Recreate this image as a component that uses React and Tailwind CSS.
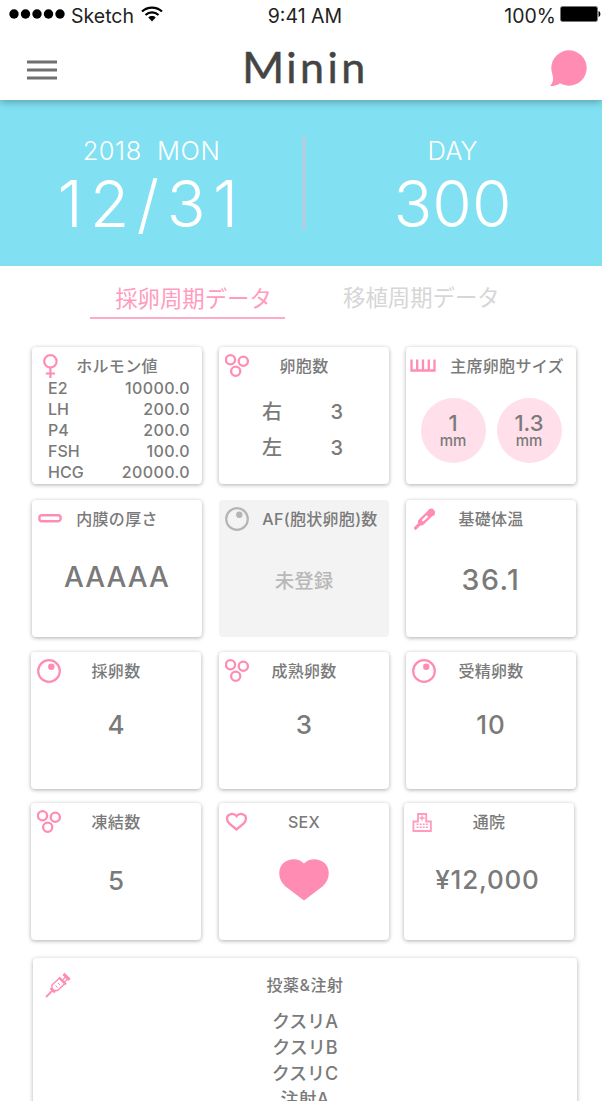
import clsx from "clsx";

function FemaleIcon() {
  return (
    <svg width="24" height="24" viewBox="0 0 24 24" fill="none" stroke="#ff8db3" strokeWidth="2.2">
      <circle cx="12.4" cy="7.3" r="6.2" />
      <path d="M12.4 13.5V24M7.8 19.5h9.2" />
    </svg>
  );
}

function CellsIcon() {
  return (
    <svg width="24" height="24" viewBox="0 0 24 24" fill="none" stroke="#ff8db3" strokeWidth="2.3">
      <circle cx="5.5" cy="5.8" r="4.6" />
      <circle cx="18.3" cy="7.2" r="4.6" />
      <circle cx="10.7" cy="17.3" r="4.6" />
    </svg>
  );
}

function RulerIcon() {
  return (
    <svg className="mr-[3px] shrink-0" width="26" height="24" viewBox="0 0 26 24" fill="none" stroke="#ff8db3" strokeWidth="2.3">
      <path d="M1.5 5.5v11h23v-11M7.2 5.5v11M13 5.5v11M18.8 5.5v11" />
    </svg>
  );
}

function MembraneIcon() {
  return (
    <svg width="24" height="24" viewBox="0 0 24 24" fill="none" stroke="#ff8db3" strokeWidth="2.4">
      <rect x="1.4" y="8.3" width="21.2" height="5.9" rx="2.4" />
    </svg>
  );
}

function EggIcon({ color = "#ff8db3" }) {
  return (
    <svg width="24" height="24" viewBox="0 0 24 24" fill="none">
      <circle cx="12" cy="12" r="10.8" stroke={color} strokeWidth="2.2" />
      <circle cx="14.3" cy="7.8" r="3.2" fill={color} />
    </svg>
  );
}

function ThermometerIcon() {
  return (
    <svg width="24" height="24" viewBox="0 0 24 24" fill="none" stroke="#ff8db3" strokeLinecap="round">
      <path d="M3.5 21.2l6-6" strokeWidth="3.2" />
      <path d="M9.5 14.8L19.4 5.3" strokeWidth="7" />
      <path d="M11 13.2L14.8 9.6" stroke="#fff" strokeWidth="2.2" />
      <path d="M17.5 3.3l4 4" strokeWidth="2.6" />
    </svg>
  );
}

function HeartOutlineIcon() {
  return (
    <svg width="24" height="24" viewBox="0 0 24 24" fill="none" stroke="#ff8db3" strokeWidth="2.3">
      <path d="M11.5 19.5L4.5 13.6C1 10.4 1.5 6 4.3 4.7c2.6-1.3 5.5-.6 7.2 1.4 1.7-2 4.600-2.700 7.200-1.400 2.800 1.300 3.300 5.700-.2 8.900z" />
    </svg>
  );
}

function HospitalIcon() {
  return (
    <svg width="24" height="24" viewBox="-1.500 -.5 24 24" fill="none" stroke="#ff9cbd" strokeWidth="1.8">
      <path d="M1.9 20.5V11h4.600V3.500h8.200V11h4.700v9.500z" />
      <path d="M10.6 5v5M8 7.500h5.200" strokeWidth="1.4" />
      <path d="M5 13.7h11.500M5 16.800h11.500" strokeWidth="1.5" strokeDasharray="2 1.1" />
    </svg>
  );
}

function SyringeIcon() {
  return (
    <svg width="26" height="26" viewBox="0 0 26 26" fill="none" stroke="#ff8db3">
      <path d="M1 25l6.500-6.500" strokeWidth="1.8" />
      <path d="M5.5 16l4.500 4.500M14 5.500l7 7" strokeWidth="2.4" />
      <path d="M7 16.500v-3.500l7.500-7 5.500 5.500-7.500 7H9z" strokeWidth="1.4" />
      <path d="M10.5 13.500l2 2M13 11l2 2" strokeWidth="1" />
      <path d="M17 8.500l4-4M19 10.500l4-4" strokeWidth="1.2" />
      <path d="M18.5 1.800l6 6" strokeWidth="3.2" />
    </svg>
  );
}

function StatusBar() {
  return (
    <div className="grid h-[30px] grid-cols-3 items-center pr-[1px] pl-[9px] text-[19.5px] text-[#222]">
      <div className="flex items-center">
        <svg className="-mt-[3px]" width="56" height="10" viewBox="0 0 56 10" fill="#000">
          <circle cx="5" cy="5" r="4.7" />
          <circle cx="16.5" cy="5" r="4.7" />
          <circle cx="28" cy="5" r="4.7" />
          <circle cx="39.5" cy="5" r="4.7" />
          <circle cx="51" cy="5" r="4.7" />
        </svg>
        <span className="mt-[2px] ml-[6px]">Sketch</span>
        <svg className="ml-[7px] -mt-[4px]" width="22" height="16" viewBox="0 0 22 16" fill="none" stroke="#000" strokeWidth="2.2">
          <path d="M1 5.500C6.500.2 15.500.2 21 5.500M4.500 9c3.700-3.400 9.300-3.400 13 0" />
          <path d="M7.3 11.500c2-1.900 5.400-1.900 7.400 0L11 15.500z" fill="#000" stroke="none" />
        </svg>
      </div>
      <span className="mt-[2px] text-center">9:41 AM</span>
      <div className="flex items-center justify-end gap-[4px]">
        <span className="mt-[2px]">100%</span>
        <svg className="-mt-[3px]" width="41" height="16" viewBox="0 0 41 16">
          <rect x=".5" y=".5" width="37" height="15" rx="2" fill="#000" stroke="#777" />
          <path d="M38.5 5c2.500.5 2.500 5.500 0 6z" fill="#000" />
        </svg>
      </div>
    </div>
  );
}

function Header() {
  return (
    <header className="relative z-10 h-[100px] bg-white shadow-[0_2px_8px_rgba(0,0,0,0.3)]">
      <StatusBar />
      <div className="flex h-[70px] items-center justify-between pr-[15px] pl-[27px]">
        <svg className="mt-[9px]" width="30" height="22" viewBox="0 0 30 22" stroke="#707070" strokeWidth="2.8">
          <path d="M0 3h30M0 11h30M0 19h30" />
        </svg>
        <h1 className="mt-[3px] ml-[4px] flex font-['Lato',sans-serif] text-[43px] leading-none text-[#444] [-webkit-text-stroke:0.5px_#444]">
          <span className="inline-block w-[44px] origin-left scale-x-[1.06]">M</span>
          <span className="tracking-[3.5px]">inin</span>
        </h1>
        <svg className="mt-[6px]" width="37" height="37" viewBox="0 0 37 37" fill="#ff8db3">
          <circle cx="19" cy="18" r="17.7" />
          <path d="M2 24c2 4 1.500 8-1.800 12 4 .2 7-.8 10-2.800z" />
        </svg>
      </div>
    </header>
  );
}

function DateBanner() {
  return (
    <section className="flex h-[166px] items-center bg-[#81e1f2] text-white">
      <div className="flex h-full w-[303px] flex-col items-center pt-[34px] font-light">
        <p className="text-[25.5px] leading-[34px] tracking-[0.5px] whitespace-pre">2018  MON</p>
        <p className="mt-[1px] text-[64px] leading-[70px] tracking-[7.5px]">12/31</p>
      </div>
      <div className="h-[94px] w-[2px] bg-[#d4bfd9]" />
      <div className="flex h-full flex-1 flex-col items-center pt-[34px] pr-[2px] font-light">
        <p className="text-[25.5px] leading-[34px]">DAY</p>
        <p className="mt-[1px] text-[64px] leading-[70px]">300</p>
      </div>
    </section>
  );
}

function Tabs() {
  return (
    <nav className="flex h-[81px] items-start pt-[14px] pl-[90px] text-[22.4px] leading-[36px]">
      <button className="h-[39px] w-[195px] border-b-2 border-[#ffaac6] pl-[12px] text-[#ff9cbd]">
        採卵周期データ
      </button>
      <button className="ml-[58px] text-[#d6d6d6]">移植周期データ</button>
    </nav>
  );
}

function Card({ icon, title, wide, disabled, className, children }) {
  return (
    <div
      className={clsx(
        "h-[137px] w-[170px] shrink-0 rounded-[4px]",
        disabled ? "bg-[#f3f3f3]" : "bg-white shadow-[0_1px_4px_rgba(0,0,0,0.32)]",
        className
      )}
    >
      <div className="flex h-[38px] items-center">
        <div className="ml-[6px] flex w-6 justify-center">{icon}</div>
        <h2
          className={clsx(
            "flex-1 text-center text-[16px] font-medium tracking-[0.3px] whitespace-nowrap",
            wide ? "pl-[2px]" : "pr-[30px]"
          )}
        >
          {title}
        </h2>
      </div>
      {children}
    </div>
  );
}

function Value({ size = "text-[26px]", className, children }) {
  return (
    <p className={clsx("text-center leading-[34px] font-medium", size, className)}>
      {children}
    </p>
  );
}

function SizeCircle({ size }) {
  return (
    <div className="flex size-[65px] flex-col items-center rounded-full bg-[#ffe0ea] pt-[14px] font-medium">
      <span className="text-[22px] leading-[22px]">{size}</span>
      <span className="text-[15px] leading-[14px]">mm</span>
    </div>
  );
}

const hormones = [
  ["E2", "10000.0"],
  ["LH", "200.0"],
  ["P4", "200.0"],
  ["FSH", "100.0"],
  ["HCG", "20000.0"],
];

const medicines = ["クスリA", "クスリB", "クスリC", "注射A"];

function App() {
  return (
    <div className="h-[1101px] w-[602px] overflow-hidden bg-white font-['Inter','Noto_Sans_CJK_JP',sans-serif] text-[#7a7a7a]">
      <Header />
      <DateBanner />
      <Tabs />

      <div className="flex gap-[17px] pl-[32px]">
        <Card icon={<FemaleIcon />} title="ホルモン値">
          <dl className="-mt-[7px] pr-[12px] pl-[16px] text-[16px] leading-[21px] font-[450]">
            {hormones.map(([name, value]) => (
              <div key={name} className="flex justify-between">
                <dt>{name}</dt>
                <dd className="tracking-[0.4px]">{value}</dd>
              </div>
            ))}
          </dl>
        </Card>
        <Card icon={<CellsIcon />} title="卵胞数">
          <div className="flex flex-col pt-[9px] text-[20px] leading-[36px] font-medium">
            <div className="flex justify-between pr-[46px] pl-[43px]">
              <span>右</span>
              <span>3</span>
            </div>
            <div className="flex justify-between pr-[46px] pl-[43px]">
              <span>左</span>
              <span>3</span>
            </div>
          </div>
        </Card>
        <Card icon={<RulerIcon />} title="主席卵胞サイズ" wide>
          <div className="flex justify-center gap-[11px] pt-[13px]">
            <SizeCircle size="1" />
            <SizeCircle size="1.3" />
          </div>
        </Card>
      </div>

      <div className="mt-[16px] flex gap-[17px] pl-[32px]">
        <Card icon={<MembraneIcon />} title="内膜の厚さ">
          <Value size="text-[28px]" className="pt-[22px] tracking-[1px]">AAAAA</Value>
        </Card>
        <Card icon={<EggIcon color="#b5b5b5" />} title="AF(胞状卵胞)数" wide disabled>
          <Value size="text-[19.5px]" className="pt-[26px] text-[#b8b8b8]">未登録</Value>
        </Card>
        <Card icon={<ThermometerIcon />} title="基礎体温">
          <Value size="text-[28.5px]" className="pt-[25px] tracking-[1.5px]">36.1</Value>
        </Card>
      </div>

      <div className="mt-[15px] flex gap-[17px] pl-[31px]">
        <Card icon={<EggIcon />} title="採卵数">
          <Value className="pt-[18px]">4</Value>
        </Card>
        <Card icon={<CellsIcon />} title="成熟卵数" className="ml-[1px]">
          <Value className="pt-[18px]">3</Value>
        </Card>
        <Card icon={<EggIcon />} title="受精卵数">
          <Value className="pt-[18px] tracking-[1px]">10</Value>
        </Card>
      </div>

      <div className="mt-[14px] flex gap-[15px] pl-[31px]">
        <Card icon={<CellsIcon />} title="凍結数">
          <Value className="pt-[23px]">5</Value>
        </Card>
        <Card icon={<HeartOutlineIcon />} title="SEX" className="ml-[3px]">
          <svg className="mx-auto mt-[18px]" width="50" height="42" viewBox="0 0 50 42" fill="#ff8db3">
            <path d="M25 41.500L6.500 27.500C-1.500 20.500-1.500 9.500 4.500 4 11-1.300 20-.8 25 4.500 30-.8 39-1.300 45.500 4c6 5.500 6 16.500-2 23.500z" />
          </svg>
        </Card>
        <Card icon={<HospitalIcon />} title="通院">
          <Value className="pt-[22px] pr-[3px] tracking-[0.8px]">¥12,000</Value>
        </Card>
      </div>

      <div className="mt-[18px] ml-[33px] h-[200px] w-[544px] rounded-[4px] bg-white pt-[14px] shadow-[0_1px_4px_rgba(0,0,0,0.32)]">
        <div className="flex h-[26px] items-center">
          <div className="ml-[12px] w-[26px]">
            <SyringeIcon />
          </div>
          <h2 className="flex-1 pr-[38px] text-center text-[16px] font-medium tracking-[0.5px]">投薬&amp;注射</h2>
        </div>
        <ul className="mt-[11px] text-center text-[18px] leading-[26px] font-medium">
          {medicines.map((name) => (
            <li key={name}>{name}</li>
          ))}
        </ul>
      </div>
    </div>
  );
}

export default App;
